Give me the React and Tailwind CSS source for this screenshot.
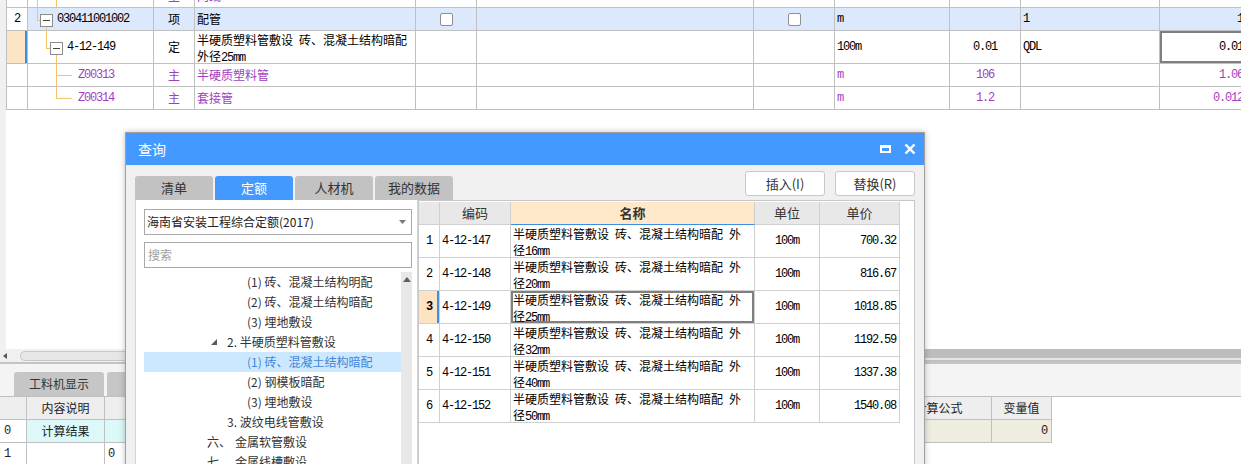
import React from 'react';

const CJK = "font-['Noto_Sans_CJK_SC','Noto_Sans',sans-serif]";
const MONO = "font-['Liberation_Mono','Noto_Sans_CJK_SC',monospace] text-[12px] tracking-[-1.2px]";
const PURPLE = 'text-[#a23fc0]';
const LINE = 'absolute bg-[#f6c26c]';

// ascii runs get the narrow mono face, everything else stays in the CJK face
function T({ s }) {
  const parts = String(s).split(/([\x20-\x7E]+)/).filter(Boolean);
  return parts.map((p, i) =>
    /^[\x20-\x7E]+$/.test(p) ? (
      <span key={i} className={`${MONO} whitespace-pre`}>{p}</span>
    ) : (
      <span key={i}>{p}</span>
    )
  );
}

const TW = [
  'w-[21px]', 'w-[126px]', 'w-[41px]', 'w-[221px]', 'w-[61px]', 'w-[277px]',
  'w-[81px]', 'w-[115px]', 'w-[71px]', 'w-[139px]', 'w-[88px]',
];

function Td({ i, className = '', children }) {
  return (
    <div className={`relative flex shrink-0 items-center overflow-hidden border-r border-[#c0c0c0] ${TW[i]} ${className}`}>
      {children}
    </div>
  );
}

function Check() {
  return <span className="block h-[13px] w-[13px] rounded-[2px] border border-[#8f8f8f] bg-white" />;
}

function Minus({ className }) {
  return (
    <span className={`absolute flex h-[13px] w-[13px] items-center justify-center border border-[#8c8c8c] bg-white ${className}`}>
      <span className="h-px w-[7px] bg-[#444]" />
    </span>
  );
}

const RW = ['w-[21px]', 'w-[71px]', 'w-[244px]', 'w-[65px]', 'w-[80px]'];

const quotas = [
  ['1', '4-12-147', '16', '700.32'],
  ['2', '4-12-148', '20', '816.67'],
  ['3', '4-12-149', '25', '1018.85'],
  ['4', '4-12-150', '32', '1192.59'],
  ['5', '4-12-151', '40', '1337.38'],
  ['6', '4-12-152', '50', '1540.08'],
];

const tree = [
  { pl: 'pl-[103px]', text: '(1) 砖、混凝土结构明配' },
  { pl: 'pl-[103px]', text: '(2) 砖、混凝土结构暗配' },
  { pl: 'pl-[103px]', text: '(3) 埋地敷设' },
  { pl: 'pl-[67px]', text: '2. 半硬质塑料管敷设', open: true },
  { pl: 'pl-[103px]', text: '(1) 砖、混凝土结构暗配', active: true },
  { pl: 'pl-[103px]', text: '(2) 钢模板暗配' },
  { pl: 'pl-[103px]', text: '(3) 埋地敷设' },
  { pl: 'pl-[83px]', text: '3. 波纹电线管敷设' },
  { pl: 'pl-[63px]', text: '六、', rest: '金属软管敷设' },
  { pl: 'pl-[63px]', text: '七、', rest: '金属线槽敷设' },
];

function Dialog() {
  return (
    <div className="absolute left-[125px] top-[132px] h-[345px] w-[800px] border border-[#a0a0a0] bg-[#f0f0f0] shadow-[0_0_6px_rgba(0,0,0,0.25)]">
      <div className="flex h-[32px] items-center justify-between bg-[#4499ff] pl-[12px] pr-[8px] text-white">
        <span className="text-[14px]">查询</span>
        <div className="flex items-center gap-[13px]">
          <span className="block h-[8px] w-[11px] border-2 border-t-[3px] border-white" />
          <svg width="12" height="10" viewBox="0 0 12 10">
            <path d="M1.5 0.5 L10.5 9.5 M10.5 0.5 L1.5 9.5" stroke="white" strokeWidth="2.4" />
          </svg>
        </div>
      </div>

      <div className="flex h-[35px] items-start justify-between px-[9px]">
        <div className="flex gap-[2px] self-end text-[13px]">
          {['清单', '定额', '人材机', '我的数据'].map(t => (
            <div
              key={t}
              className={`flex h-[24px] w-[78px] items-center justify-center rounded-t-[3px] ${t === '定额' ? 'bg-[#4499ff] text-white' : 'bg-[#c2c2c2] text-[#333]'}`}
            >
              {t}
            </div>
          ))}
        </div>
        <div className="mt-[6px] flex gap-[10px] text-[13px] text-[#333]">
          <button className="h-[25px] w-[80px] rounded-[3px] border border-[#c8c8c8] bg-white">插入(I)</button>
          <button className="h-[25px] w-[80px] rounded-[3px] border border-[#c8c8c8] bg-white">替换(R)</button>
        </div>
      </div>

      <div className="flex px-[9px]">
        {/* left: library + tree */}
        <div className="h-[280px] w-[283px] shrink-0 border border-t-0 border-[#d4d4d4] bg-white pl-[8px] pr-[5px]">
          <div className="mt-[9px] flex h-[26px] items-center justify-between border border-[#a9a9a9] pl-[2px] pr-[5px] text-[12px] text-[#222]">
            <span>海南省安装工程综合定额(2017)</span>
            <svg width="7" height="4" viewBox="0 0 7 4"><path d="M0 0 H7 L3.5 4 Z" fill="#7a7a7a" /></svg>
          </div>
          <div className="mt-[7px] flex h-[26px] items-center border border-[#a9a9a9] pl-[3px] text-[12px] text-[#a0a0a0]">
            搜索
          </div>
          <div className="mt-[4px] flex">
            <div className="flex-1 text-[12px] text-[#333]">
              {tree.map((r, i) => (
                <div
                  key={i}
                  className={`flex h-[20px] items-center ${r.pl} ${r.active ? 'bg-[#cce8ff] text-[#3f86d9]' : ''}`}
                >
                  {r.open && (
                    <svg width="7" height="7" viewBox="0 0 7 7" className="mr-[9px]">
                      <path d="M6 0 V6 H0 Z" fill="#5a5a5a" />
                    </svg>
                  )}
                  <span>{r.text}</span>
                  {r.rest && <span className="ml-[4px]">{r.rest}</span>}
                </div>
              ))}
            </div>
            <div className="flex h-[200px] w-[11px] flex-col items-center bg-[#e8e8e8] pt-[5px]">
              <svg width="8" height="5" viewBox="0 0 8 5"><path d="M0 5 L4 0 L8 5 Z" fill="#606060" /></svg>
            </div>
          </div>
        </div>

        {/* right: quota list */}
        <div className="h-[280px] w-[497px] shrink-0 border border-[#c8c8c8] bg-white pt-[1px]">
          <div className="flex h-[23px] text-[13px] text-[#333]">
            {['', '编码', '名称', '单位', '单价'].map((h, i) => (
              <div
                key={i}
                className={`flex shrink-0 items-center justify-center border-r border-b ${RW[i]} ${i === 2 ? 'border-r-[#d0d0d0] border-b-[#3c8ee6] bg-[#ffe7c9] font-bold' : 'border-[#d0d0d0] bg-[#e8e8e8]'}`}
              >
                {h}
              </div>
            ))}
          </div>
          {quotas.map(([n, code, d, price]) => {
            const sel = n === '3';
            return (
              <div key={n} className="flex h-[33px] text-[12px] text-black">
                <div className={`relative flex shrink-0 items-center justify-center border-r border-b border-[#d0d0d0] ${RW[0]} ${sel ? 'bg-[#fde3c2] font-bold' : ''}`}>
                  <span className={`${MONO} ${sel ? 'font-bold' : ''}`}>{n}</span>
                  {sel && <span className="absolute right-0 top-0 h-full w-[2px] bg-[#3d8fe8]" />}
                </div>
                <div className={`flex shrink-0 items-center border-r border-b border-[#d0d0d0] pl-[2px] ${RW[1]}`}>
                  <span className={MONO}>{code}</span>
                </div>
                <div className={`flex shrink-0 flex-col justify-center border-r border-b border-[#d0d0d0] pl-[2px] pt-[3px] leading-[13px] ${RW[2]} ${sel ? 'shadow-[inset_0_0_0_2px_#7f7f7f]' : ''}`}>
                  <div className="whitespace-nowrap"><T s="半硬质塑料管敷设 砖、混凝土结构暗配 外" /></div>
                  <div className="whitespace-nowrap"><T s={`径${d}mm`} /></div>
                </div>
                <div className={`flex shrink-0 items-center justify-center border-r border-b border-[#d0d0d0] ${RW[3]}`}>
                  <span className={MONO}>100m</span>
                </div>
                <div className={`flex shrink-0 items-center justify-end border-r border-b border-[#d0d0d0] pr-[3px] ${RW[4]}`}>
                  <span className={MONO}>{price}</span>
                </div>
              </div>
            );
          })}
        </div>
      </div>
    </div>
  );
}

export default function App() {
  return (
    <div className={`relative h-[464px] w-[1241px] overflow-hidden bg-white text-[12px] text-black ${CJK}`}>
      {/* upper grid */}
      <div className="flex h-[349px]">
        <div className="w-[6px] shrink-0 bg-[#f0f0f0]" />
        <div className="flex-1 overflow-hidden">
          <div className="-mt-[15px] border-l border-[#c0c0c0]">
            <div className={`flex h-[23px] border-b border-[#c0c0c0] ${PURPLE}`}>
              <Td i={0} />
              <Td i={1} className="pl-[50px]">
                <span className={`${LINE} left-[9px] top-0 h-full w-px`} />
                <span className={`${LINE} left-[28px] top-0 h-full w-px`} />
                <T s="Z00312" />
              </Td>
              <Td i={2} className="justify-center">主</Td>
              <Td i={3} className="pl-[2px]">网线</Td>
              <Td i={4} />
              <Td i={5} />
              <Td i={6} />
              <Td i={7} className="pl-[2px]"><T s="m" /></Td>
              <Td i={8} className="justify-center"><T s="103" /></Td>
              <Td i={9} />
              <Td i={10} className="justify-end pr-[4px]"><T s="815.0" /></Td>
            </div>

            <div className="flex h-[23px] border-b border-[#c0c0c0]">
              <Td i={0} className="justify-center bg-white"><T s="2" /></Td>
              <Td i={1} className="bg-[#dce8fb] pl-[29px]">
                <span className={`${LINE} left-[9px] top-0 h-[12px] w-px`} />
                <span className={`${LINE} left-[9px] top-[12px] h-px w-[3px]`} />
                <Minus className="left-[12px] top-[6px]" />
                <span className={`${LINE} left-[18px] top-[19px] h-[4px] w-px`} />
                <T s="030411001002" />
              </Td>
              <Td i={2} className="justify-center bg-[#dce8fb]">项</Td>
              <Td i={3} className="bg-[#dce8fb] pl-[2px]">配管</Td>
              <Td i={4} className="justify-center bg-[#dce8fb]"><Check /></Td>
              <Td i={5} className="bg-[#dce8fb]" />
              <Td i={6} className="justify-center bg-[#dce8fb]"><Check /></Td>
              <Td i={7} className="bg-[#dce8fb] pl-[2px]"><T s="m" /></Td>
              <Td i={8} className="bg-[#dce8fb]" />
              <Td i={9} className="bg-[#dce8fb] pl-[2px]"><T s="1" /></Td>
              <Td i={10} className="justify-end bg-[#dce8fb] pr-[4px]"><T s="1" /></Td>
            </div>

            <div className="flex h-[33px] border-b border-[#c0c0c0]">
              <Td i={0} className="bg-[#fde4c4]">
                <span className="absolute right-0 top-0 h-full w-[2px] bg-[#3a8ee6]" />
              </Td>
              <Td i={1} className="pl-[39px]">
                <span className={`${LINE} left-[18px] top-0 h-[17px] w-px`} />
                <span className={`${LINE} left-[18px] top-[17px] h-px w-[4px]`} />
                <Minus className="left-[22px] top-[11px]" />
                <span className={`${LINE} left-[28px] top-[24px] h-[9px] w-px`} />
                <T s="4-12-149" />
              </Td>
              <Td i={2} className="justify-center">定</Td>
              <Td i={3} className="flex-col !items-start justify-center pl-[2px] pt-[3px] leading-[14px]">
                <div className="whitespace-nowrap"><T s="半硬质塑料管敷设 砖、混凝土结构暗配" /></div>
                <div className="whitespace-nowrap"><T s="外径25mm" /></div>
              </Td>
              <Td i={4} />
              <Td i={5} />
              <Td i={6} />
              <Td i={7} className="pl-[2px]"><T s="100m" /></Td>
              <Td i={8} className="justify-center"><T s="0.01" /></Td>
              <Td i={9} className="pl-[2px]"><T s="QDL" /></Td>
              <Td i={10} className="justify-end pr-[4px] shadow-[inset_0_0_0_2px_#7f7f7f]"><T s="0.01" /></Td>
            </div>

            {[
              ['Z00313', '半硬质塑料管', '106', '1.06', 'h-full'],
              ['Z00314', '套接管', '1.2', '0.012', 'h-[11px]'],
            ].map(([code, name, qty, total, vh]) => (
              <div key={code} className={`flex h-[23px] border-b border-[#c0c0c0] ${PURPLE}`}>
                <Td i={0} />
                <Td i={1} className="pl-[50px]">
                  <span className={`${LINE} left-[28px] top-0 w-px ${vh}`} />
                  <span className={`${LINE} left-[28px] top-[11px] h-px w-[16px]`} />
                  <T s={code} />
                </Td>
                <Td i={2} className="justify-center">主</Td>
                <Td i={3} className="pl-[2px]">{name}</Td>
                <Td i={4} />
                <Td i={5} />
                <Td i={6} />
                <Td i={7} className="pl-[2px]"><T s="m" /></Td>
                <Td i={8} className="justify-center"><T s={qty} /></Td>
                <Td i={9} />
                <Td i={10} className="justify-end pr-[4px]"><T s={total} /></Td>
              </div>
            ))}
          </div>
        </div>
      </div>

      {/* horizontal scrollbar */}
      <div className="flex h-[13px]">
        <div className="flex w-[600px] items-center bg-[#f0f0f0] pl-[3px]">
          <svg width="4" height="6" viewBox="0 0 4 6"><path d="M4 0 V6 L0 3 Z" fill="#555" /></svg>
          <div className="ml-[13px] h-[10px] flex-1 rounded-l-full border border-r-0 border-[#c8c8c8] bg-[#e6e6e6]" />
        </div>
        <div className="flex flex-1 flex-col">
          <div className="h-[9px] bg-[#bdbdbd]" />
          <div className="h-[2px] bg-[#e6e6e6]" />
          <div className="h-[2px] bg-[#c0c0c0]" />
        </div>
      </div>
      <div className="h-[2px] bg-[#c4c4c4]" />

      {/* lower panel tabs */}
      <div className="flex h-[33px] items-end gap-[3px] border-b border-[#c0c0c0] bg-[#f4f4f4] pl-[14px] text-[12px] text-[#333]">
        <div className="flex h-[24px] w-[90px] items-center justify-center rounded-t-[3px] bg-[#c6c6c6]">工料机显示</div>
        <div className="flex h-[24px] w-[90px] items-center justify-center rounded-t-[3px] bg-[#c6c6c6]">单价构成</div>
      </div>

      {/* lower panel grid */}
      <div className="text-[12px] text-[#222]">
        <div className="flex h-[23px]">
          <div className="w-[27px] shrink-0 border-r border-b border-[#c0c0c0] bg-[#eeeeee]" />
          <div className="flex w-[78px] shrink-0 items-center justify-center border-r border-b border-[#c0c0c0] bg-[#eeeeee]">内容说明</div>
          <div className="w-[781px] shrink-0 border-r border-b border-[#c0c0c0] bg-[#eeeeee]" />
          <div className="flex w-[106px] shrink-0 items-center justify-center border-r border-b border-[#c0c0c0] bg-[#eeeeee]">计算公式</div>
          <div className="flex w-[60px] shrink-0 items-center justify-center border-r border-b border-[#c0c0c0] bg-[#eeeeee]">变量值</div>
        </div>
        <div className="flex h-[23px]">
          <div className="flex w-[27px] shrink-0 items-center border-r border-b border-[#c0c0c0] pl-[4px]"><T s="0" /></div>
          <div className="flex w-[78px] shrink-0 items-center justify-center border-r border-b border-[#c0c0c0] bg-[#dcf8f8]">计算结果</div>
          <div className="w-[781px] shrink-0 border-r border-b border-[#c0c0c0] bg-[#dcf8f8]" />
          <div className="w-[106px] shrink-0 border-r border-b border-[#c0c0c0] bg-[#efede0]" />
          <div className="flex w-[60px] shrink-0 items-center justify-end border-r border-b border-[#c0c0c0] bg-[#efede0] pr-[4px]"><T s="0" /></div>
        </div>
        <div className="flex h-[23px]">
          <div className="flex w-[27px] shrink-0 items-center border-r border-b border-[#c0c0c0] pl-[4px]"><T s="1" /></div>
          <div className="w-[78px] shrink-0 border-r border-b border-[#c0c0c0]" />
          <div className="flex w-[781px] shrink-0 items-center border-r border-b border-[#c0c0c0] pl-[3px]"><T s="0" /></div>
        </div>
      </div>

      <Dialog />
    </div>
  );
}
